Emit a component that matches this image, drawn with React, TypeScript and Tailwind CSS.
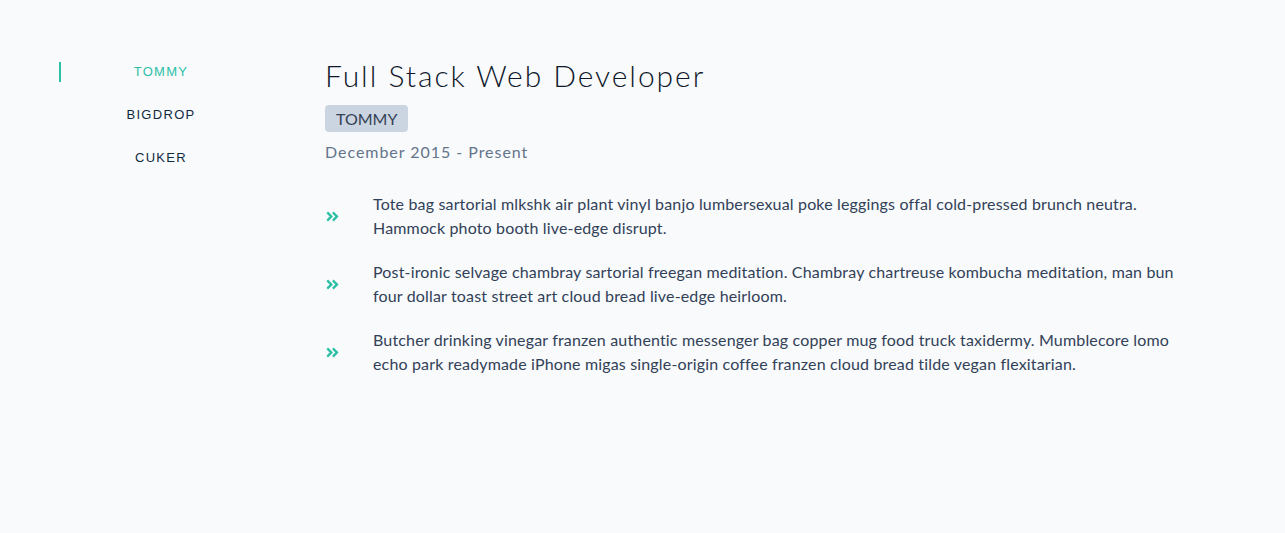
import { FaAngleDoubleRight } from "react-icons/fa";

const jobs = ["TOMMY", "BIGDROP", "CUKER"];

const duties = [
  "Tote bag sartorial mlkshk air plant vinyl banjo lumbersexual poke leggings offal cold-pressed brunch neutra. Hammock photo booth live-edge disrupt.",
  "Post-ironic selvage chambray sartorial freegan meditation. Chambray chartreuse kombucha meditation, man bun four dollar toast street art cloud bread live-edge heirloom.",
  "Butcher drinking vinegar franzen authentic messenger bag copper mug food truck taxidermy. Mumblecore lomo echo park readymade iPhone migas single-origin coffee franzen cloud bread tilde vegan flexitarian.",
];

export default function App() {
  return (
    <div className="min-h-screen bg-[#f8fafc] font-['Lato','Noto_Sans',sans-serif]">
      <div className="flex pl-[59px] pt-[57px]">
        <nav className="mt-[5px] flex w-[202px] flex-col gap-[23px]">
          {jobs.map((job, i) => (
            <button
              key={job}
              type="button"
              className={`h-5 border-l-2 text-center font-['Liberation_Sans',Arial,sans-serif] text-[13px] leading-5 tracking-[0.1em] ${
                i === 0 ? "border-[#2cbfa6] text-[#2cbfa6]" : "border-transparent text-[#102a42]"
              }`}
            >
              {job}
            </button>
          ))}
        </nav>

        <article className="ml-[64px] w-[860px]">
          <h3 className="text-[30px] font-light leading-9 tracking-[0.065em] text-[#0f172a]">
            Full Stack Web Developer
          </h3>
          <span className="mt-[12px] inline-block rounded bg-[#cbd5e1] px-[11px] py-[2px] text-[16px] leading-[23px] text-[#334155]">
            TOMMY
          </span>
          <p className="mt-2 text-[16px] leading-6 tracking-[0.06em] text-[#64748b]">
            December 2015 - Present
          </p>
          <div className="mt-7 flex flex-col gap-5">
            {duties.map((d) => (
              <div key={d} className="flex items-center gap-[33px]">
                <FaAngleDoubleRight className="shrink-0 text-[#2cbfa6]" size={15} />
                <p className="w-[812px] text-[16px] leading-6 tracking-[0.01em] text-[#324157]">{d}</p>
              </div>
            ))}
          </div>
        </article>
      </div>
    </div>
  );
}
